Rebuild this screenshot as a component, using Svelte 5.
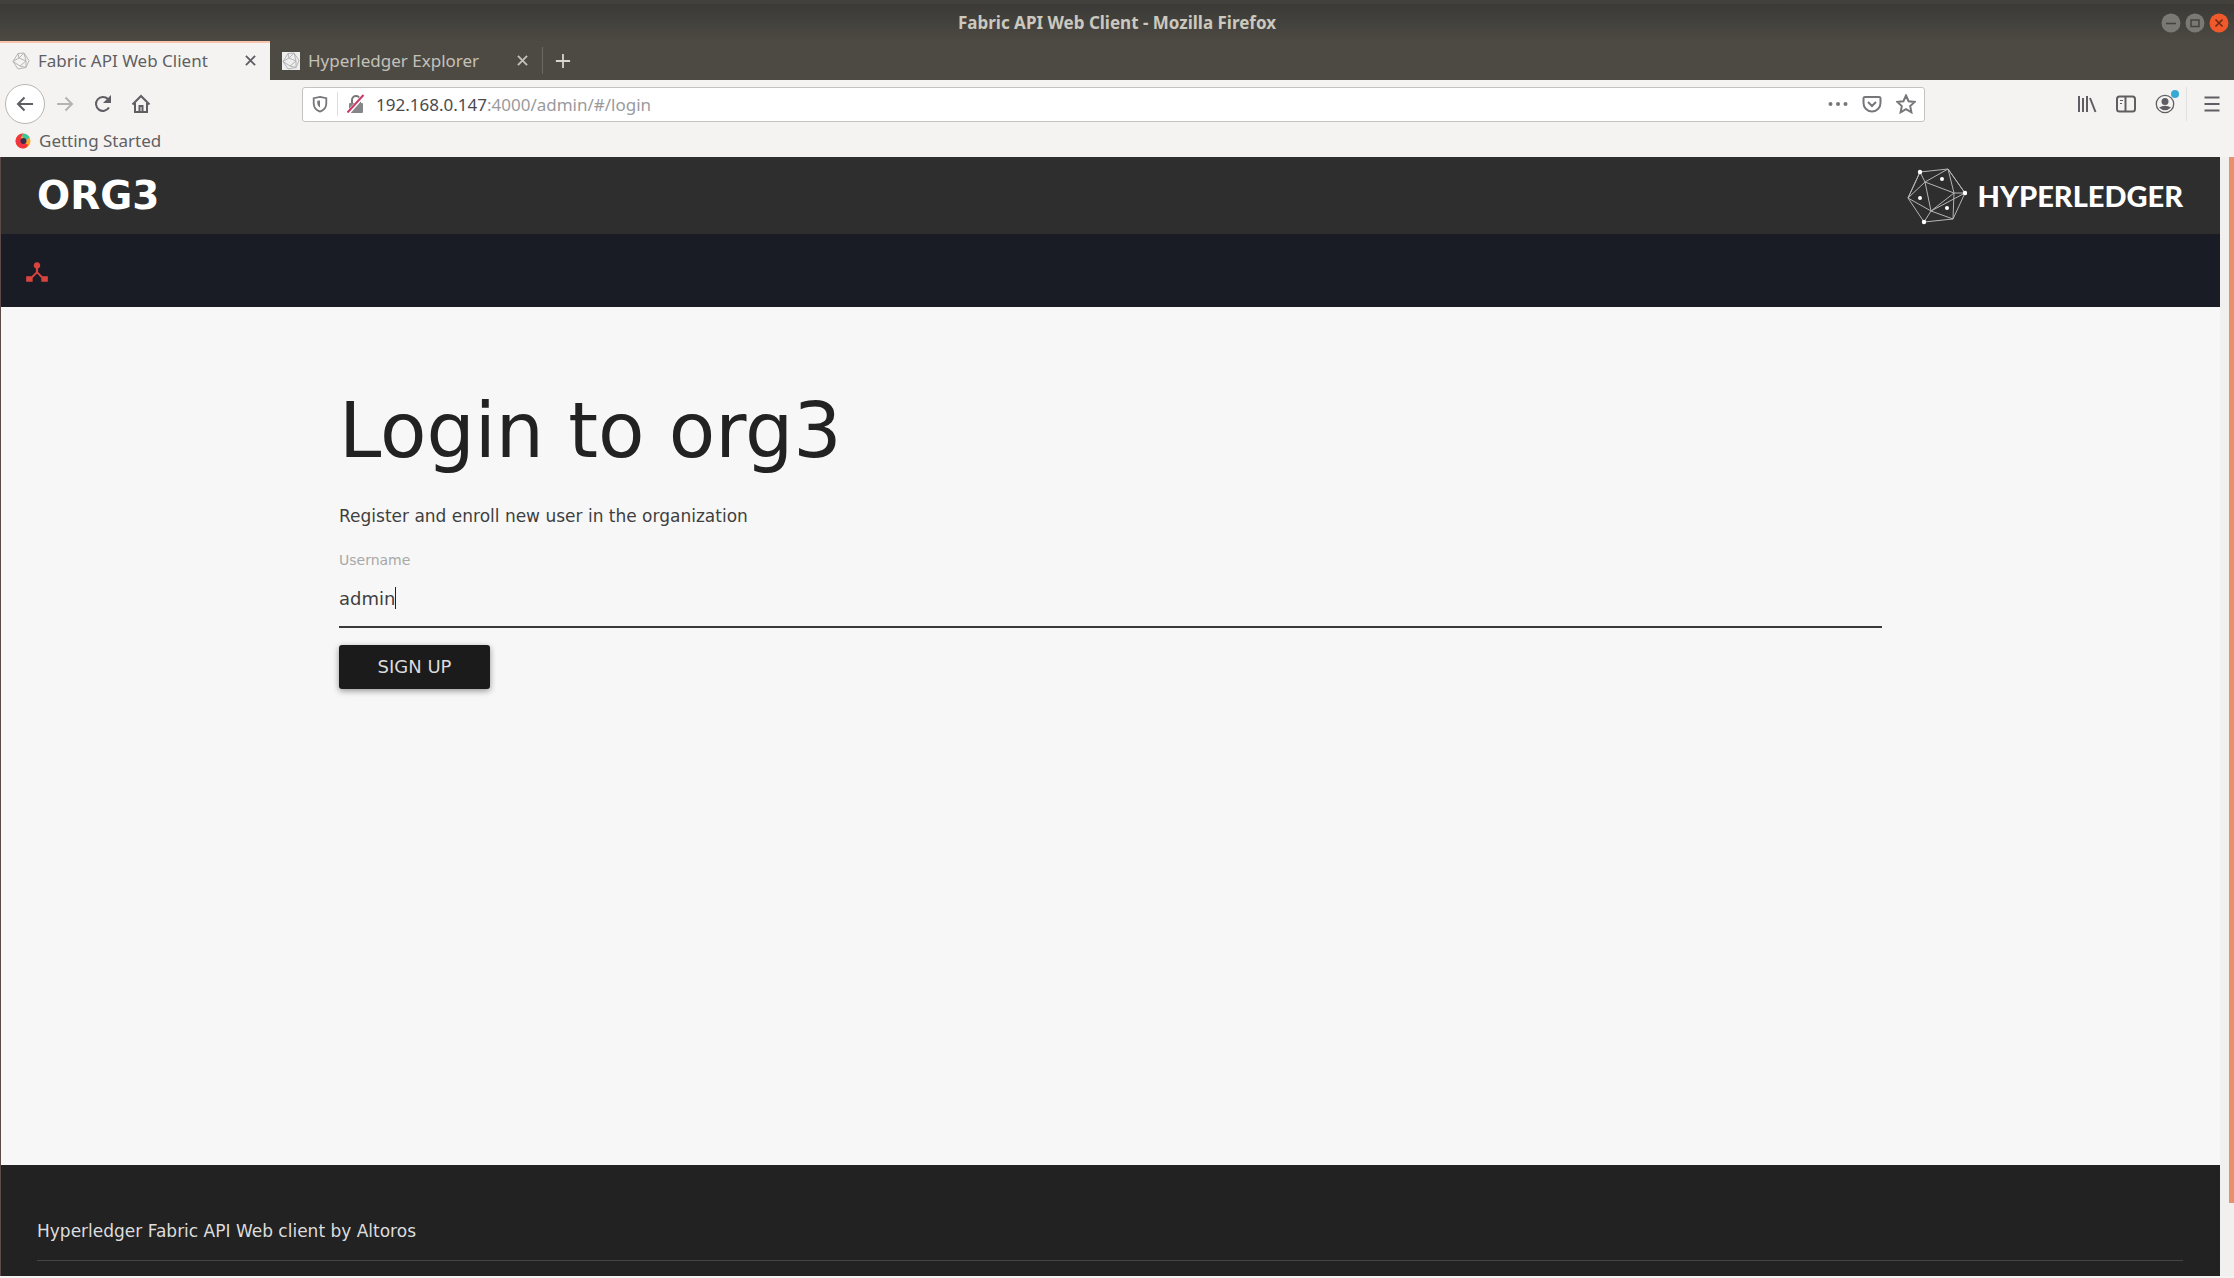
<script lang="ts">
  let username = $state("admin");
  let url = $state("/admin/#/login");
</script>

<div class="window">
  <div class="desktop-strip"></div>

  <header class="titlebar">
    <span class="window-title">Fabric API Web Client - Mozilla Firefox</span>
    <div class="window-buttons">
      <button aria-label="Minimize">
        <svg viewBox="0 0 20 20"><circle cx="10" cy="10" r="9.5" fill="#7b7973" /><path d="M5 10.5h10" stroke="#45433e" stroke-width="1.6" /></svg>
      </button>
      <button aria-label="Maximize">
        <svg viewBox="0 0 20 20"><circle cx="10" cy="10" r="9.5" fill="#7b7973" /><path d="M6 7h8v6.5h-8z" fill="none" stroke="#45433e" stroke-width="1.5" /></svg>
      </button>
      <button aria-label="Close">
        <svg viewBox="0 0 20 20"><circle cx="10" cy="10" r="9.5" fill="#f0592b" /><path d="M6.5 6.5l7 7M13.5 6.5l-7 7" stroke="#6b2a15" stroke-width="1.6" /></svg>
      </button>
    </div>
  </header>

  <nav class="tabs" aria-label="Tabs">
    <div class="tab active">
      {@render favicon()}
      <span class="tab-label">Fabric API Web Client</span>
      {@render closeTab()}
    </div>
    <div class="tab">
      <span class="favicon-box">{@render favicon()}</span>
      <span class="tab-label">Hyperledger Explorer</span>
      {@render closeTab()}
    </div>
    <button class="new-tab" aria-label="New tab">
      <svg viewBox="0 0 18 18"><path d="M9 1v16M1 9h16" stroke="#d8d6d0" stroke-width="2" /></svg>
    </button>
  </nav>

  <div class="toolbar">
    <div class="nav-buttons">
      <button class="back" aria-label="Back">
        <svg viewBox="0 0 20 20"><path d="M18 10H3M9.5 3.5L3 10l6.5 6.5" /></svg>
      </button>
      <button class="forward" aria-label="Forward">
        <svg viewBox="0 0 20 20"><path d="M2 10h15M10.5 3.5L17 10l-6.5 6.5" /></svg>
      </button>
      <button aria-label="Reload">
        <svg viewBox="0 0 20 20"><path d="M16 13.5A7 7 0 1 1 15 5" /><path d="M18 1v8h-8z" fill="#5f5f63" stroke="none" /></svg>
      </button>
      <button aria-label="Home">
        <svg viewBox="0 0 20 20"><path d="M1.5 10.5L10 2l8.5 8.5M4 9v9h12V9M8.5 18v-6h3v6" /></svg>
      </button>
    </div>

    <div class="urlbar">
      <svg class="shield" viewBox="0 0 18 20"><path d="M9 2L16 3.5v6c0 5-3 7.500-7 9C5 17 2 14.500 2 9.500v-6z" /><path d="M9 6v8c-2-1.500-3-3-3-5V6.500z" fill="#77777b" stroke="none" /></svg>
      <span class="url-divider"></span>
      <svg class="lock" viewBox="0 0 20 20"><path d="M6 9V6a4 4 0 0 1 8 0v3" /><rect x="3" y="9" width="14" height="10" rx="1" fill="#86868a" stroke="none" /><path d="M2 19L18 1" stroke="#fff" stroke-width="4" /><path d="M1.5 18.5L17.5 1" stroke="#c93a66" /></svg>
      <label class="url-text"><b>192.168.0.147</b>:4000<input aria-label="Address" bind:value={url} spellcheck="false" /></label>
      <div class="url-actions">
        <button aria-label="Page actions">
          <svg viewBox="0 0 20 20"><g fill="#77777b" stroke="none"><circle cx="2.5" cy="10" r="2" /><circle cx="10" cy="10" r="2" /><circle cx="17.5" cy="10" r="2" /></g></svg>
        </button>
        <button aria-label="Save to Pocket">
          <svg viewBox="0 0 20 20"><path d="M3 3h14q1.5 0 1.5 1.500V9a8.500 8.500 0 0 1-17 0V4.500Q1.500 3 3 3zM6 8l4 4 4-4" /></svg>
        </button>
        <button aria-label="Bookmark">
          <svg viewBox="0 0 20 20"><path d="M10 1.500l2.600 5.700 6.100.7-4.500 4.200 1.200 6.200L10 15.200l-5.400 3.100 1.200-6.200L1.300 7.900l6.100-.7z" /></svg>
        </button>
      </div>
    </div>

    <div class="tools">
      <button aria-label="Library">
        <svg viewBox="0 0 20 20"><path d="M2 2v16M6 4v14M10 2v16M13 4l5.5 14" /></svg>
      </button>
      <button aria-label="Sidebars">
        <svg viewBox="0 0 20 20"><rect x="1" y="2.5" width="18" height="15" rx="2.5" /><path d="M9.5 3v14" /><path d="M4 6.5h3M4 9.5h2" stroke-width="1.2" /></svg>
      </button>
      <button class="account" aria-label="Account">
        <svg viewBox="0 0 20 20"><circle cx="10" cy="10" r="8.7" stroke-width="1.3" /><circle cx="10" cy="7.5" r="3.5" fill="#5f5f63" stroke="none" /><path d="M4 13.5q6-3.5 12 0-6 5.500-12 0z" fill="#5f5f63" stroke="none" /></svg>
        <span class="badge"></span>
      </button>
      <span class="tool-divider"></span>
      <button aria-label="Open menu">
        <svg viewBox="0 0 20 20"><path d="M2.5 3.5h15M2.5 10h15M2.5 16.5h15" /></svg>
      </button>
    </div>
  </div>

  <div class="bookmarks">
    <a href="#start">
      <svg viewBox="0 0 16 16"><circle cx="8" cy="8" r="7.500" fill="#ffa62b" /><path d="M8 .5a7.500 7.500 0 0 0 0 15q4 0 5-4l-6-2-1-5z" fill="#f0353f" /><path d="M8 .5q5 .5 6.500 4L11 7 7 3z" fill="#35c7a4" /><circle cx="8.500" cy="8" r="3" fill="#35304f" /></svg>
      Getting Started
    </a>
  </div>

  <div class="viewport">
    <div class="page">
      <header class="brand-bar">
        <h2>ORG3</h2>
        <a class="logo" href="#home">
          <svg viewBox="0 0 60 58">
            <g fill="none" stroke="#b5b5b5" stroke-width="1">
              <path d="M13 5L41 2 58 26 46 52 17 55 1 31z" />
              <path d="M13 5L18 15 41 2 47 26 58 26M1 31L18 15 47 26 24 44 1 31M18 15L24 44 46 52 47 26M17 55L24 44M13 5L1 31M24 44L58 26M41 2L58 26" />
            </g>
            <g fill="#fff"><circle cx="13" cy="5" r="2.200" /><circle cx="35" cy="12" r="2" /><circle cx="58" cy="26" r="2.200" /><circle cx="13" cy="31" r="2" /><circle cx="40" cy="41" r="2" /><circle cx="17" cy="55" r="2.200" /></g>
          </svg>
          <span>HYPERLEDGER</span>
        </a>
      </header>

      <nav class="menu-bar" aria-label="Main">
        <a href="#channel" aria-label="Channel">
          <svg viewBox="0 0 24 24"><path d="M17 16l-4-4V8.820A3 3 0 1 0 11 8.820V12l-4 4H2v5h6v-3.500l4-4.200 4 4.200V21h6v-5z" /></svg>
        </a>
      </nav>

      <main>
        <h1>Login to org3</h1>
        <p>Register and enroll new user in the organization</p>
        <form onsubmit={(e) => e.preventDefault()}>
          <label for="username">Username</label>
          <div class="field">
            <input id="username" bind:value={username} autocomplete="off" spellcheck="false" />
            <span class="caret"></span>
          </div>
          <button type="submit">SIGN UP</button>
        </form>
      </main>

      <footer>
        <div>Hyperledger Fabric API Web client by Altoros</div>
      </footer>
    </div>
    <div class="scrollbar"><div class="thumb"></div></div>
  </div>
</div>

{#snippet favicon()}
  <svg class="favicon" viewBox="0 0 18 18"><path d="M6 1.500L12 1l5 7.500-3 7L6 17 1 9.500zM6 1.500L7 6l5-5 2 8-7-3-6 3.500L8 14 14 9l0 6.500L8 14" /></svg>
{/snippet}

{#snippet closeTab()}
  <button class="close-tab" aria-label="Close tab">
    <svg viewBox="0 0 12 12"><path d="M1 1l10 10M11 1L1 11" /></svg>
  </button>
{/snippet}

<style>
  :global(body) {
    margin: 0;
  }

  .window {
    min-height: 100vh;
    box-sizing: border-box;
    display: flex;
    flex-direction: column;
    padding-bottom: 2px;
    background: #f4f3f2;
    font-family: "Noto Sans", "Open Sans", sans-serif;
    font-size: 17px;
    color: #5f5f63;
  }

  button {
    border: none;
    background: none;
    padding: 0;
    font: inherit;
    color: inherit;
    display: flex;
    align-items: center;
    justify-content: center;
  }

  a {
    color: inherit;
    text-decoration: none;
  }

  svg {
    display: block;
    flex: none;
  }

  .desktop-strip {
    height: 4px;
    background: #42413c;
  }

  .titlebar {
    height: 37px;
    display: grid;
    grid-template-columns: 1fr auto 1fr;
    align-items: center;
    background: linear-gradient(#3b3a36, #4c4943);
  }

  .window-title {
    grid-column: 2;
    color: #cbc8bf;
    font-size: 17px;
    font-weight: 700;
  }

  .window-buttons {
    display: flex;
    justify-content: flex-end;
    gap: 4px;
    padding-right: 5px;
  }

  .window-buttons svg {
    width: 20px;
    height: 20px;
  }

  .tabs {
    height: 39px;
    display: flex;
    background: #4d4a43;
  }

  .tab {
    width: 272px;
    box-sizing: border-box;
    display: flex;
    align-items: center;
    gap: 8px;
    padding: 0 14px 0 12px;
    color: #c4c1b9;
  }

  .tab.active {
    width: 270px;
    padding-bottom: 2px;
    background: #f4f3f2;
    border-top: 2px solid #f8c4ae;
    color: #5f5f63;
  }

  .tab-label {
    flex: 1;
    white-space: nowrap;
    line-height: 24px;
  }

  .favicon {
    width: 18px;
    height: 18px;
    fill: none;
    stroke: #b5b5b5;
    stroke-width: 1;
  }

  .favicon-box {
    background: #eee;
  }

  .close-tab svg {
    width: 11px;
    height: 11px;
    stroke: currentColor;
    stroke-width: 2;
  }

  .new-tab {
    width: 40px;
    height: 27px;
    margin-top: 6px;
    border-left: 1px solid #6b6861;
  }

  .new-tab svg {
    width: 16px;
    height: 16px;
  }

  .toolbar {
    height: 48px;
    display: flex;
    align-items: center;
    background: #f4f3f2;
  }

  .toolbar svg {
    width: 20px;
    height: 20px;
    fill: none;
    stroke: #5f5f63;
    stroke-width: 2;
  }

  .nav-buttons {
    width: 302px;
    flex: none;
    box-sizing: border-box;
    display: flex;
    align-items: center;
    gap: 18px;
    padding-left: 5px;
  }

  .back {
    width: 40px;
    height: 40px;
    box-sizing: border-box;
    margin-right: -8px;
    border: 1px solid #b8b6b3;
    border-radius: 50%;
    background: #fff;
  }

  .nav-buttons .forward svg {
    stroke: #b4b3b2;
  }

  .urlbar {
    flex: 1;
    height: 35px;
    box-sizing: border-box;
    display: flex;
    align-items: center;
    gap: 8px;
    padding: 0 8px;
    border: 1px solid #c4c3c1;
    border-radius: 3px;
    background: #fff;
  }

  .urlbar svg {
    stroke: #77777b;
  }

  .urlbar .shield {
    width: 18px;
    height: 18px;
  }

  .url-divider {
    width: 1px;
    height: 24px;
    background: #dddcdb;
  }

  .url-text {
    flex: 1;
    display: flex;
    align-items: center;
    padding-left: 2px;
    color: #9a9a9d;
  }

  .url-text b {
    font-weight: 400;
    color: #4a4a4e;
  }

  .url-text input {
    flex: 1;
    border: none;
    outline: none;
    padding: 0;
    background: none;
    font: inherit;
    color: inherit;
  }

  .url-actions {
    display: flex;
    gap: 14px;
  }

  .tools {
    width: 309px;
    flex: none;
    box-sizing: border-box;
    display: flex;
    align-items: center;
    justify-content: flex-end;
    gap: 19px;
    padding-right: 12px;
  }

  .account {
    position: relative;
  }

  .badge {
    position: absolute;
    top: -4px;
    right: -4px;
    width: 8px;
    height: 8px;
    border-radius: 50%;
    background: #35a9d4;
  }

  .tool-divider {
    width: 1px;
    height: 34px;
    margin: 0 -4px 0 -8px;
    background: #e2e0de;
  }

  .bookmarks {
    height: 29px;
    box-sizing: border-box;
    display: flex;
    align-items: center;
    padding: 0 0 4px 15px;
    background: #f4f3f2;
  }

  .bookmarks a {
    display: flex;
    align-items: center;
    gap: 8px;
  }

  .bookmarks svg {
    width: 16px;
    height: 16px;
  }

  .viewport {
    flex: 1;
    display: flex;
    border-left: 1px solid #5c4a4a;
  }

  .page {
    flex: 1;
    display: flex;
    flex-direction: column;
    background: #f7f7f7;
    font-family: "DejaVu Sans", sans-serif;
  }

  .brand-bar {
    height: 77px;
    display: flex;
    align-items: center;
    justify-content: space-between;
    padding: 0 37px 0 36px;
    background: #2e2e2e;
    color: #fff;
  }

  .brand-bar h2 {
    margin: 0;
    font-size: 39px;
    line-height: 77px;
  }

  .logo {
    display: flex;
    align-items: center;
    gap: 10px;
    font-family: Lato, sans-serif;
    font-size: 29px;
    font-weight: 900;
  }

  .logo svg {
    width: 60px;
    height: 58px;
  }

  .menu-bar {
    height: 73px;
    box-sizing: border-box;
    display: flex;
    align-items: center;
    padding: 2px 0 0 23px;
    background: #191c24;
  }

  .menu-bar svg {
    width: 26px;
    height: 26px;
    fill: #d9443f;
  }

  main {
    flex: 1;
    padding: 82px 338px 0;
  }

  h1 {
    margin: 0;
    font-size: 76px;
    font-weight: 400;
    line-height: 84px;
    color: #222;
  }

  p {
    margin: 31px 0 0;
    font-size: 17px;
    line-height: 24px;
    color: #3f3f3f;
  }

  form label {
    display: block;
    margin-top: 22px;
    font-size: 14px;
    line-height: 20px;
    color: #a8a8a8;
  }

  .field {
    height: 56px;
    display: flex;
    align-items: center;
    border-bottom: 2px solid #3a3a3a;
  }

  .field input {
    field-sizing: content;
    border: none;
    outline: none;
    padding: 0;
    background: none;
    font-family: inherit;
    font-size: 18px;
    color: #3f3f3f;
    caret-color: transparent;
  }

  .caret {
    width: 1px;
    height: 22px;
    background: #222;
  }

  form button {
    width: 151px;
    height: 44px;
    margin-top: 17px;
    border-radius: 3px;
    background: #1b1b1b;
    color: #dcdcdc;
    font-size: 18px;
    line-height: 24px;
    box-shadow: 0 2px 6px rgba(0, 0, 0, 0.4);
  }

  footer {
    height: 111px;
    box-sizing: border-box;
    padding: 36px 37px 0 36px;
    background: #222;
    color: #ddd;
    font-size: 17px;
  }

  footer div {
    padding: 18px 0 17px;
    line-height: 24px;
    border-bottom: 1px solid #444;
  }

  .scrollbar {
    width: 14px;
    display: flex;
    justify-content: flex-end;
    background: #f1f0ef;
  }

  .thumb {
    width: 5px;
    height: calc(100% - 73px);
    background: #e8906c;
  }
</style>
